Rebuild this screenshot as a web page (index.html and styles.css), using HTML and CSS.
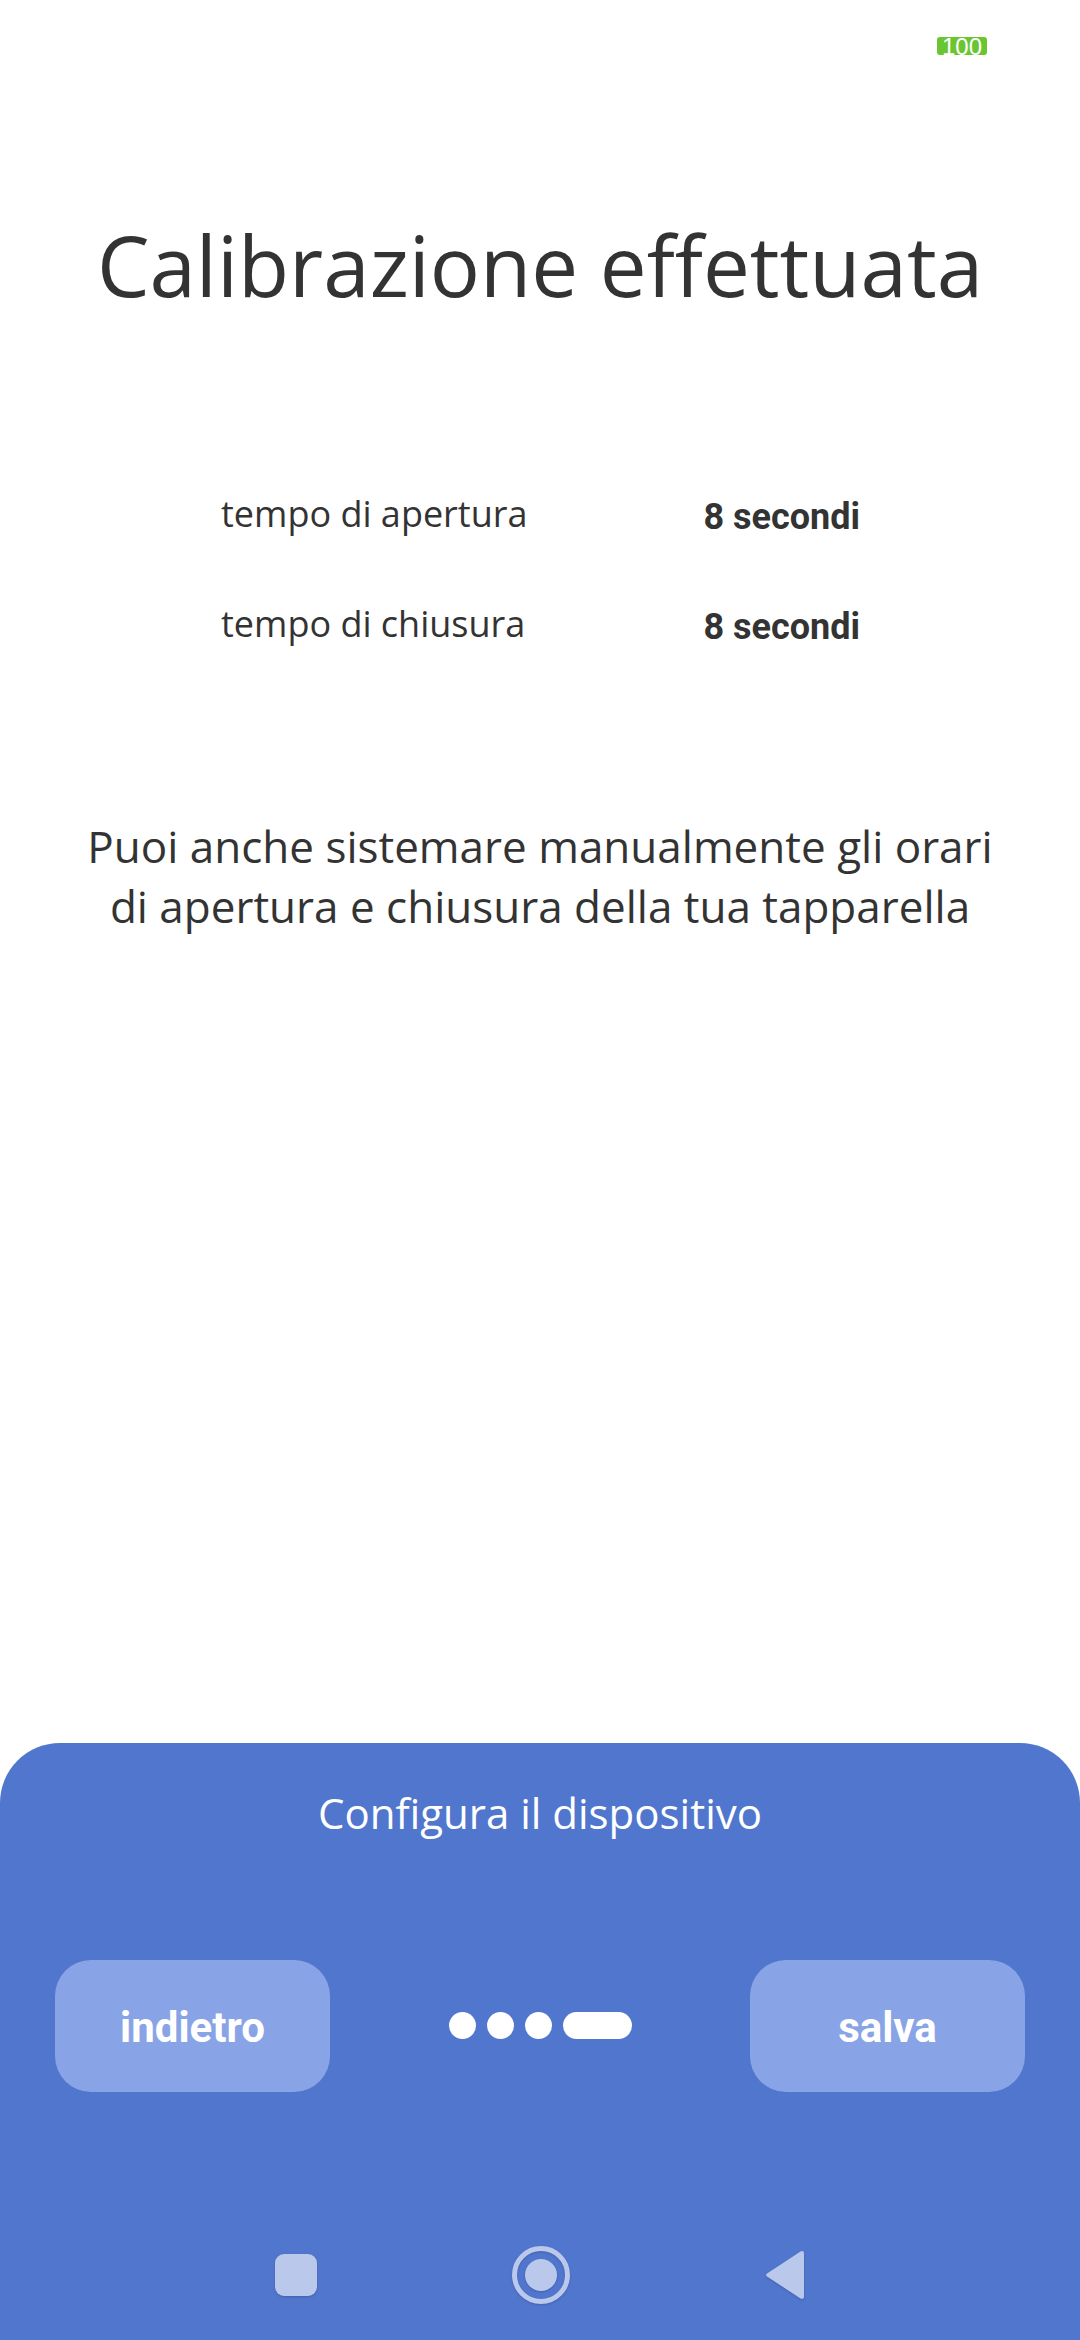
FILE: index.html
```html
<!DOCTYPE html>
<html lang="it">
<head>
<meta charset="utf-8">
<title>Calibrazione effettuata</title>
<link rel="stylesheet" href="styles.css">
</head>
<body>
<div class="screen">
  <div class="status"><span class="battery">100</span></div>
  <main class="content">
    <h1 class="title">Calibrazione effettuata</h1>
    <div class="times">
      <div class="row"><span class="label">tempo di apertura</span><span class="value">8 secondi</span></div>
      <div class="row"><span class="label">tempo di chiusura</span><span class="value">8 secondi</span></div>
    </div>
    <p class="note">Puoi anche sistemare manualmente gli orari<br>di apertura e chiusura della tua tapparella</p>
  </main>
  <footer class="sheet">
    <div class="sheet-title">Configura il dispositivo</div>
    <div class="controls">
      <button class="btn">indietro</button>
      <div class="dots"><i class="dot"></i><i class="dot"></i><i class="dot"></i><i class="dot wide"></i></div>
      <button class="btn">salva</button>
    </div>
    <nav class="navbar">
      <svg class="nav-icon" width="42" height="42" viewBox="0 0 42 42"><rect width="42" height="42" rx="9" fill="#bac8ec"/></svg>
      <svg class="nav-icon" width="58" height="58" viewBox="0 0 58 58"><circle cx="29" cy="29" r="26.5" fill="none" stroke="#bac8ec" stroke-width="5"/><circle cx="29" cy="29" r="16" fill="#bac8ec"/></svg>
      <svg class="nav-icon" width="40" height="50" viewBox="0 0 40 50"><path d="M35.5 1.5 L2 23.5 Q0 25 2 26.5 L35.5 48.5 Q39 50 39 46.5 V3.5 Q39 0 35.5 1.5 Z" fill="#bac8ec"/></svg>
    </nav>
  </footer>
</div>
</body>
</html>
```
FILE: styles.css
```css
* { box-sizing: border-box; }
html, body { margin: 0; padding: 0; }
body { width: 1080px; height: 2340px; background: #fff; font-family: "Open Sans", sans-serif; color: #333; overflow: hidden; }
.screen { width: 1080px; height: 2340px; display: flex; flex-direction: column; }
.status { height: 90px; padding: 37px 93px 0 0; display: flex; justify-content: flex-end; align-items: flex-start; }
.battery { width: 50px; height: 18px; background: #69c531; border-radius: 3px; color: #fff; font: 24px/19px "Liberation Sans", sans-serif; text-align: center; }
.content { flex: 1; display: flex; flex-direction: column; align-items: center; }
.title { margin: 118px 0 0; font-weight: 400; font-size: 83.5px; line-height: 114px; text-align: center; }
.times { margin-top: 166px; width: 640px; display: flex; flex-direction: column; gap: 62px; }
.row { display: flex; align-items: center; height: 48px; }
.label { width: 484px; padding: 2px 0 0 1px; font-size: 36px; }
.value { padding-top: 9px; font-family: Roboto, sans-serif; font-weight: 700; font-size: 36px; white-space: nowrap; }
.note { margin: 170px 0 0; font-size: 44px; line-height: 60px; text-align: center; }
.sheet { height: 597px; background: #5176cd; border-radius: 60px 60px 0 0; display: flex; flex-direction: column; align-items: center; }
.sheet-title { margin-top: 38px; font-size: 42px; line-height: 64px; color: #fff; }
.controls { margin-top: 115px; width: 970px; display: flex; justify-content: space-between; align-items: center; }
.btn { width: 275px; height: 132px; border: 0; border-radius: 36px; background: #89a4e6; color: #fff; font-family: Roboto, sans-serif; font-weight: 700; font-size: 42px; padding: 2px 0 0; }
.dots { display: flex; gap: 11px; padding: 0 0 2px 1px; }
.dot { width: 27px; height: 27px; border-radius: 14px; background: #fff; display: block; }
.dot.wide { width: 69px; }
.navbar { margin-top: 154px; display: flex; align-items: center; gap: 195px; }
.nav-icon { filter: drop-shadow(0 1px 1px rgba(40, 60, 120, .35)); }
```
